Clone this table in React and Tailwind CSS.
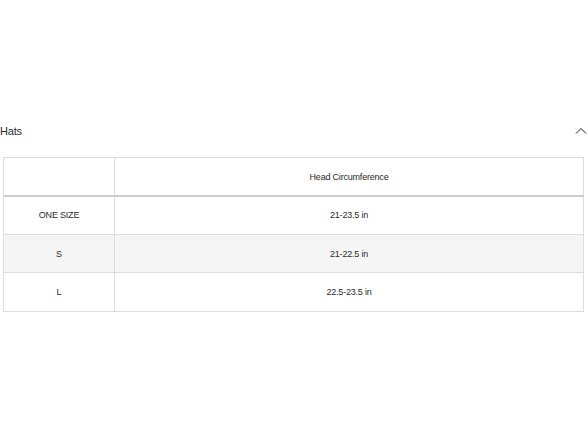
export default function App() {
  const rows = [
    { size: "ONE SIZE", head: "21-23.5 in" },
    { size: "S", head: "21-22.5 in" },
    { size: "L", head: "22.5-23.5 in" },
  ];

  return (
    <div className="h-[441px] w-[588px] bg-white font-['Liberation_Sans',Arial,sans-serif] text-[#2a2a2a]">
      <div className="h-[118px]" />
      <div className="flex h-[26px] items-center justify-between pr-[1px]">
        <span className="text-[11px] tracking-[-0.2px]">Hats</span>
        <svg width="12" height="8" viewBox="0 0 12 8" fill="none" stroke="#222" strokeWidth="1">
          <path d="M1 6.5 L6 1.5 L11 6.5" />
        </svg>
      </div>
      <div className="h-[13px]" />
      <table className="ml-[3px] w-[581px] border-collapse text-center text-[9px] tracking-[-0.2px]">
        <thead>
          <tr className="h-[38px]">
            <th className="w-[111px] border border-b-2 border-[#ddd] border-b-[#ccc] pt-[2px] font-normal" />
            <th className="border border-b-2 border-[#ddd] border-b-[#ccc] pt-[2px] font-normal">Head Circumference</th>
          </tr>
        </thead>
        <tbody>
          {rows.map((r, i) => (
            <tr key={r.size} className={`h-[38.5px] ${i === 1 ? "bg-[#f5f5f5]" : "bg-white"}`}>
              <td className="border border-[#ddd] pt-[2px]">{r.size}</td>
              <td className="border border-[#ddd] pt-[2px]">{r.head}</td>
            </tr>
          ))}
        </tbody>
      </table>
    </div>
  );
}
